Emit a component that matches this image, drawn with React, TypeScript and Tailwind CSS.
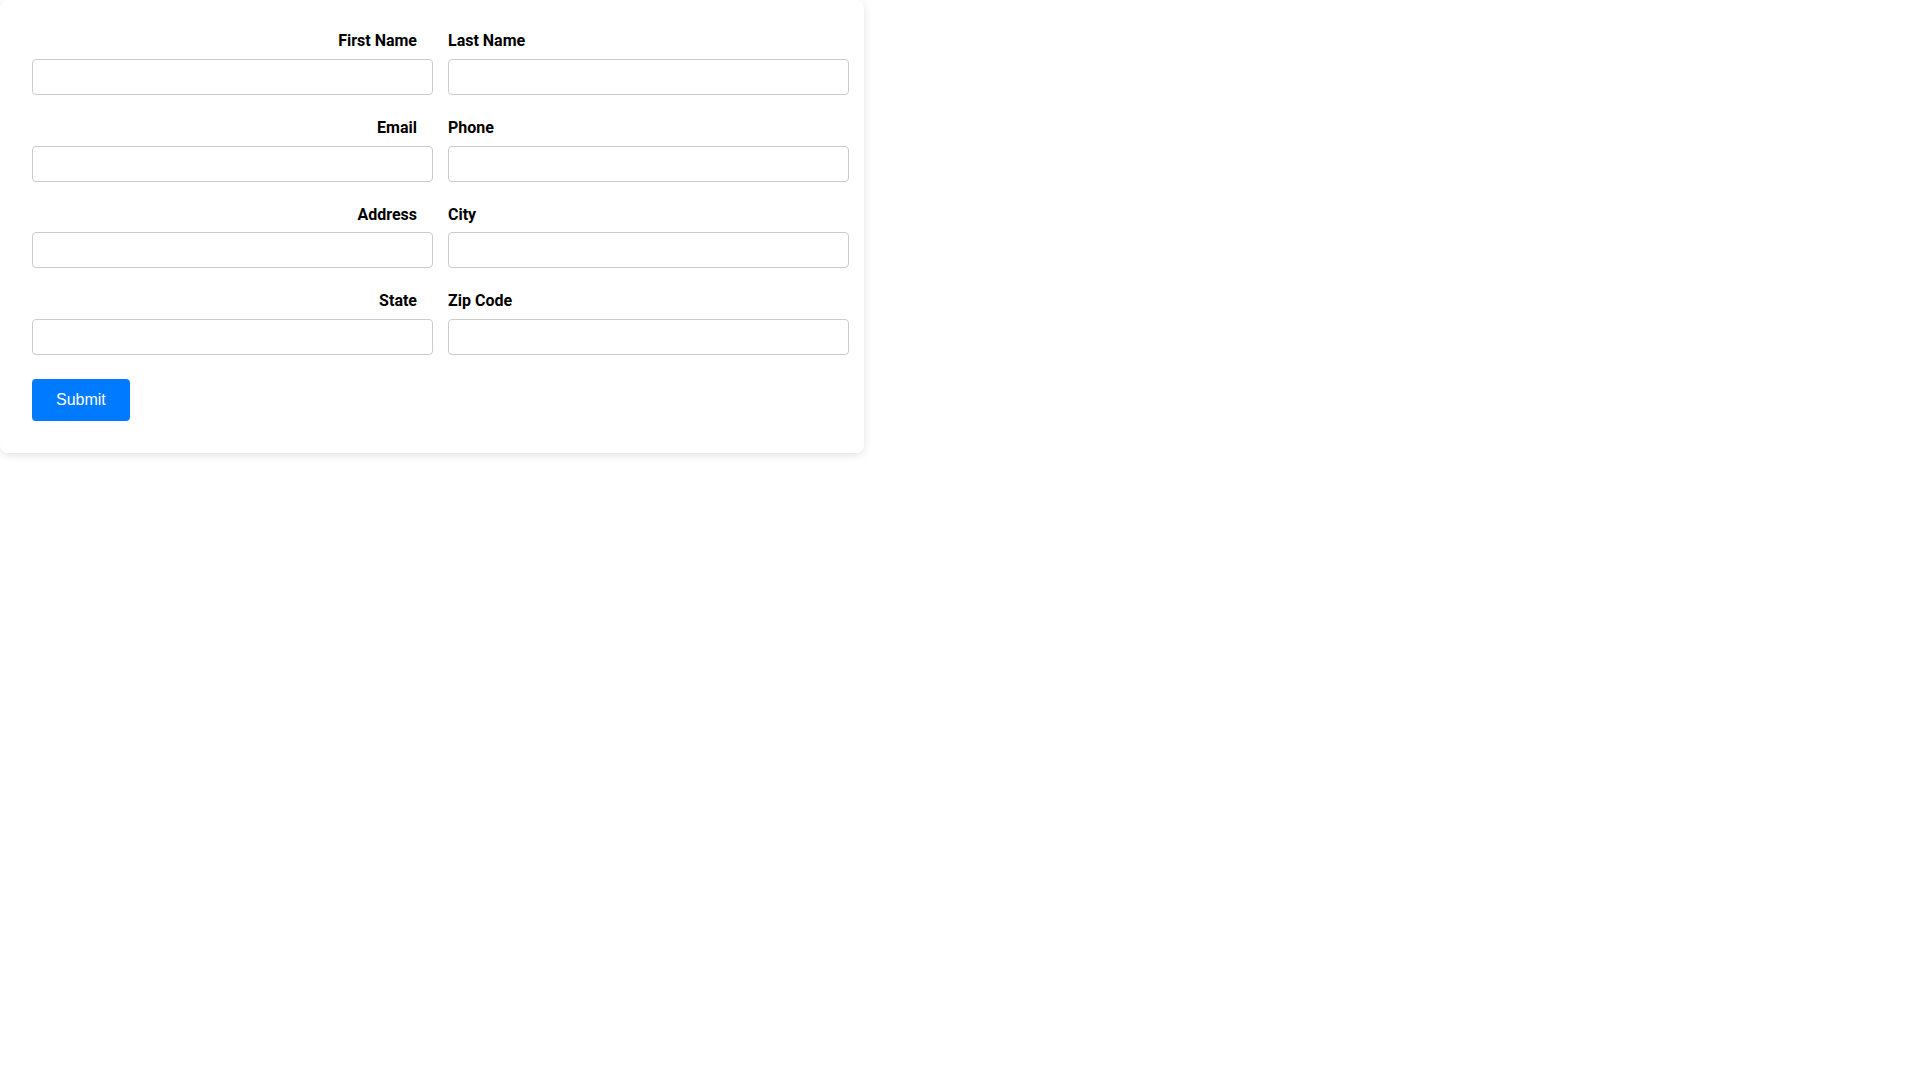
import React from "react";

const rows = [
  ["First Name", "Last Name"],
  ["Email", "Phone"],
  ["Address", "City"],
  ["State", "Zip Code"],
];

export default function App() {
  return (
    <div className="min-h-screen bg-white font-['Roboto',sans-serif]">
      <form
        className="w-[864px] bg-white rounded-lg shadow-[0_2px_8px_rgba(0,0,0,0.12)] pt-8 pb-8 pl-8 pr-[15px]"
        onSubmit={(e) => e.preventDefault()}
      >
        {rows.map(([left, right]) => (
          <div key={left} className="grid grid-cols-2 gap-x-[15px] mb-6">
            <div className="flex flex-col">
              <label className="text-right pr-4 font-bold text-base text-black mb-2 h-[18.75px] leading-[18.75px]">
                {left}
              </label>
              <input
                type="text"
                className="h-9 w-full border border-[#cccccc] rounded px-2 bg-white outline-none"
              />
            </div>
            <div className="flex flex-col">
              <label className="text-left font-bold text-base text-black mb-2 h-[18.75px] leading-[18.75px]">
                {right}
              </label>
              <input
                type="text"
                className="h-9 w-full border border-[#cccccc] rounded px-2 bg-white outline-none"
              />
            </div>
          </div>
        ))}
        <button
          type="submit"
          className="h-[42px] px-6 bg-[#007bff] text-white rounded font-['Liberation_Sans',Arial,sans-serif] text-base"
        >
          Submit
        </button>
      </form>
    </div>
  );
}
